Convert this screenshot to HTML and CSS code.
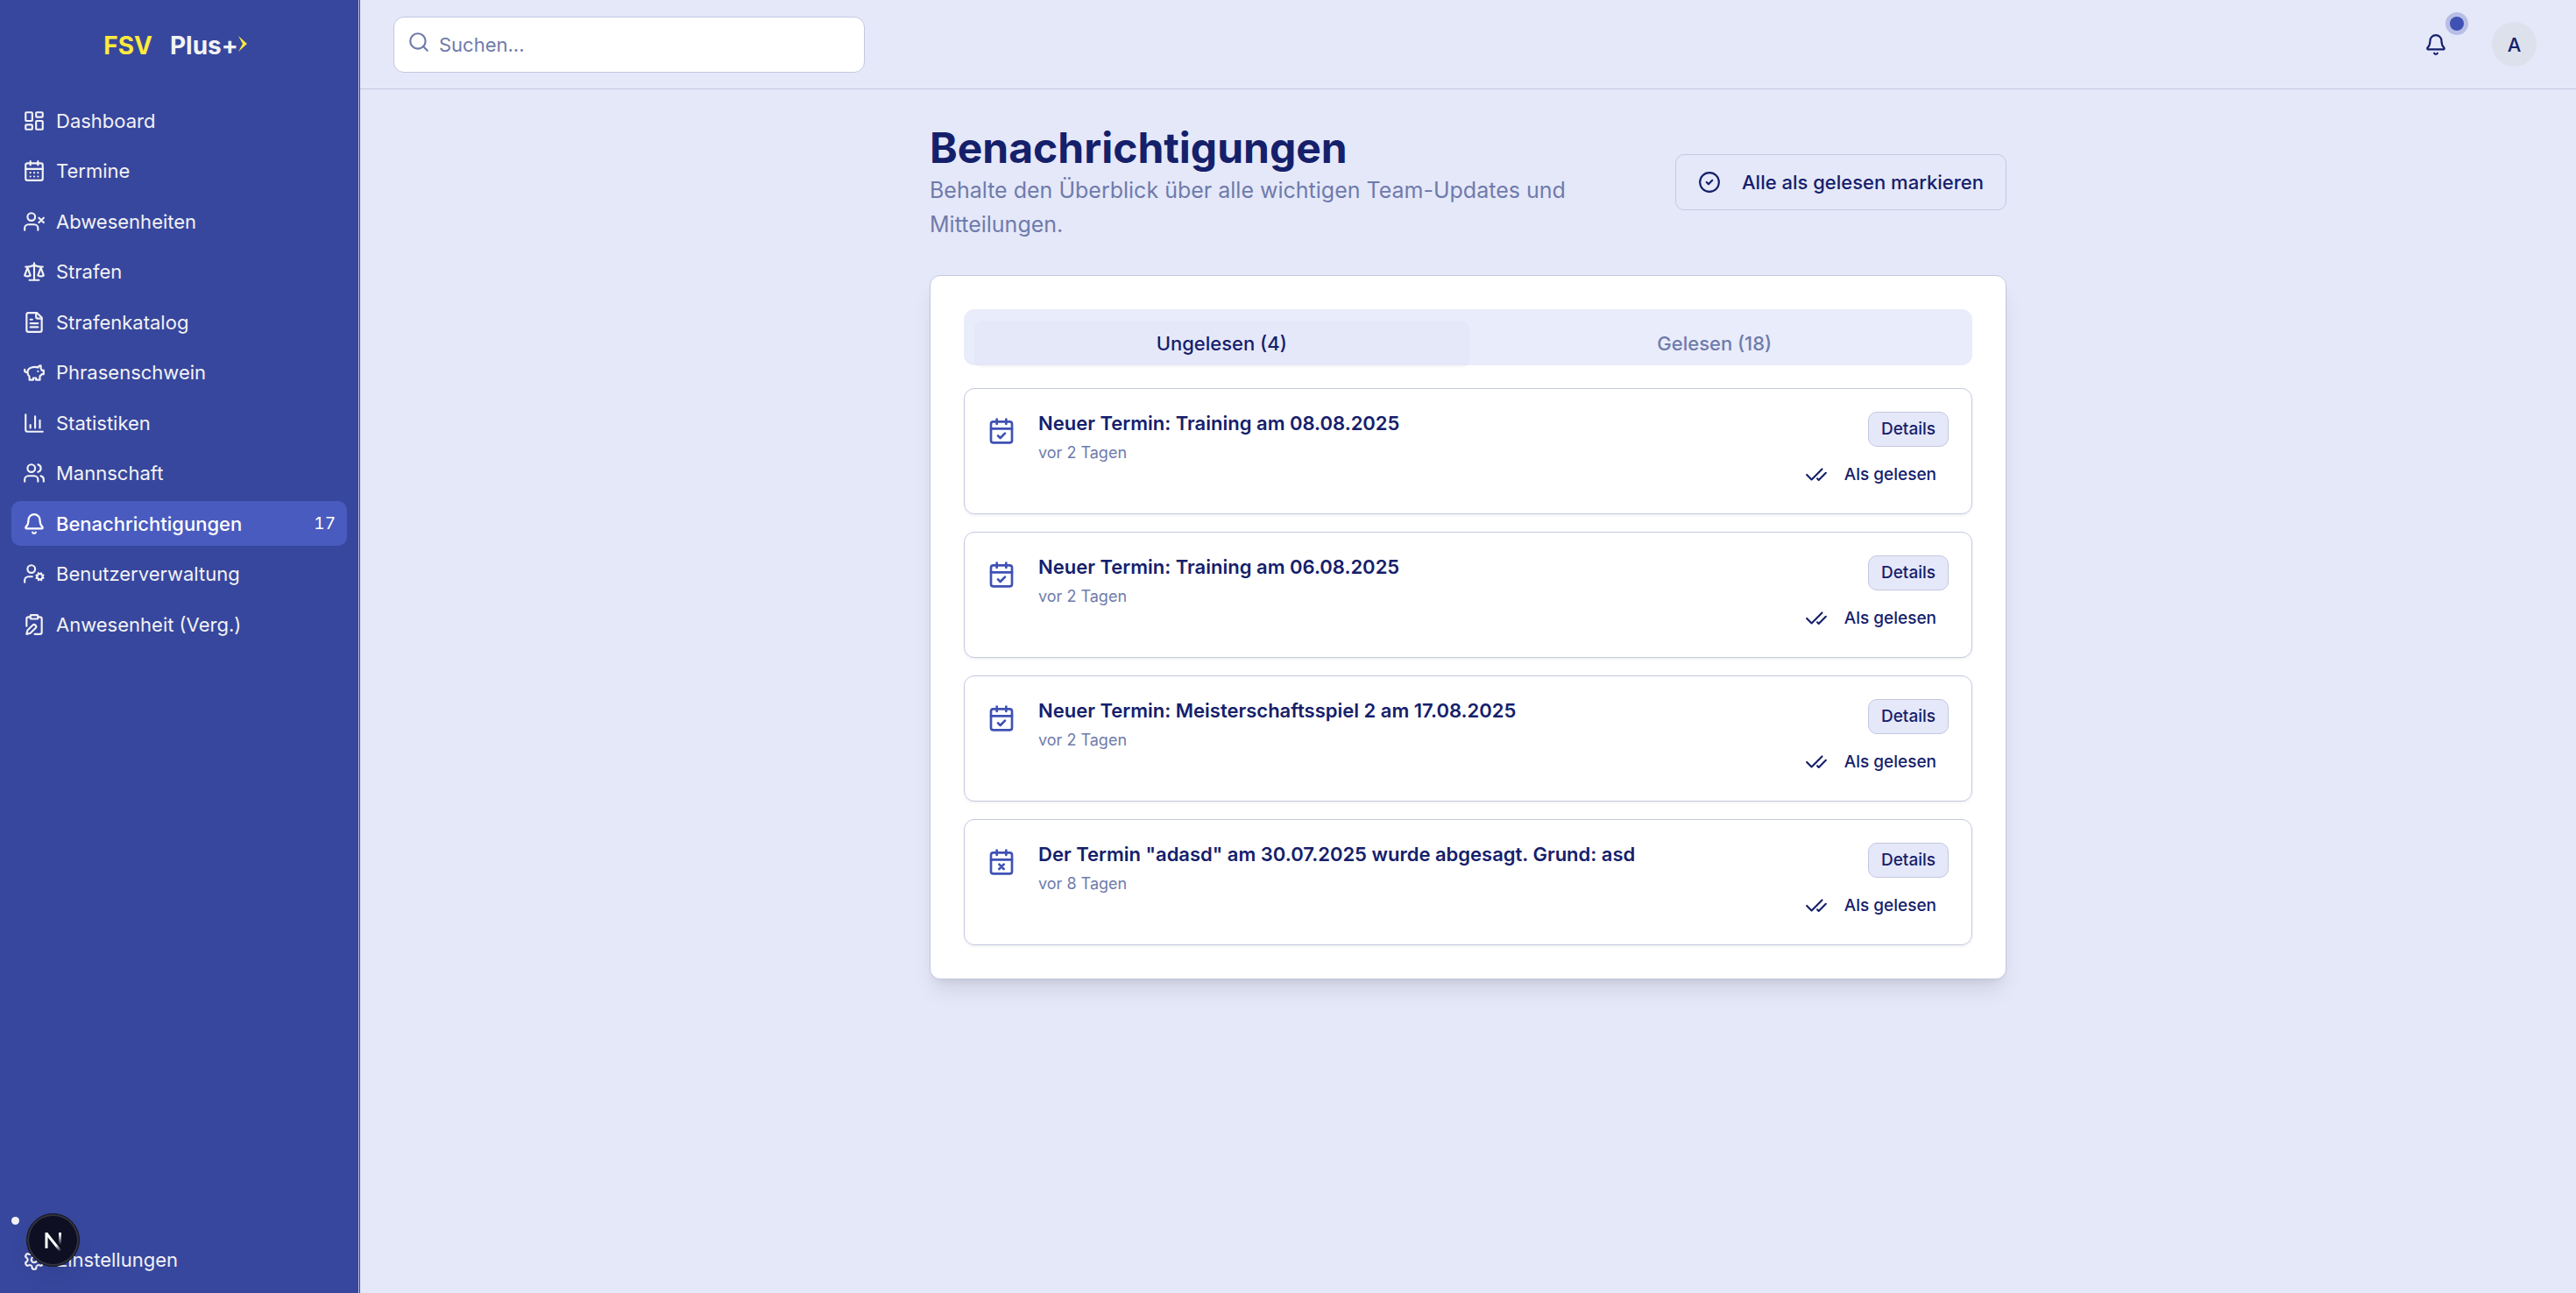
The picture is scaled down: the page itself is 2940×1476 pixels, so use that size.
FILE: index.html
```html
<!DOCTYPE html>
<html lang="de">
<head>
<meta charset="utf-8">
<meta name="viewport" content="width=device-width, initial-scale=1">
<title>Benachrichtigungen – FSV Plus+</title>
<link rel="stylesheet" href="styles.css">
</head>
<body>
<svg class="sprite" aria-hidden="true">
  <symbol id="i-calendar-check" viewBox="0 0 24 24"><path d="M8 2v4M16 2v4M3 10h18"/><rect x="3" y="4" width="18" height="18" rx="2"/><path d="m9 16 2 2 4-4"/></symbol>
  <symbol id="i-calendar-x" viewBox="0 0 24 24"><path d="M8 2v4M16 2v4M3 10h18"/><rect x="3" y="4" width="18" height="18" rx="2"/><path d="m14 14-4 4M10 14l4 4"/></symbol>
  <symbol id="i-check-check" viewBox="0 0 24 24"><path d="M18 6 7 17l-5-5M22 10l-7.5 7.5L13 16"/></symbol>
  <symbol id="i-bell" viewBox="0 0 24 24"><path d="M10.268 21a2 2 0 0 0 3.464 0"/><path d="M3.262 15.326A1 1 0 0 0 4 17h16a1 1 0 0 0 .74-1.673C19.41 13.956 18 12.499 18 8A6 6 0 0 0 6 8c0 4.499-1.411 5.956-2.738 7.326"/></symbol>
</svg>

<div class="app">
  <aside class="sidebar">
    <a class="logo" href="#" aria-label="FSV Plus+">
      <span class="logo-club">FSV</span>
      <span class="logo-plus">Plus+</span>
      <svg class="logo-mark" viewBox="0 0 10 18" aria-hidden="true"><path d="M0 0 10 9 0 18 5 9z"/></svg>
    </a>
    <nav aria-label="Hauptnavigation">
      <ul class="menu">
        <li><a class="menu-link" href="#"><svg class="icon" viewBox="0 0 24 24"><rect x="3" y="3" width="7" height="9" rx="1"/><rect x="14" y="3" width="7" height="5" rx="1"/><rect x="14" y="12" width="7" height="9" rx="1"/><rect x="3" y="16" width="7" height="5" rx="1"/></svg>Dashboard</a></li>
        <li><a class="menu-link" href="#"><svg class="icon" viewBox="0 0 24 24"><path d="M8 2v4M16 2v4M3 10h18"/><rect x="3" y="4" width="18" height="18" rx="2"/><path d="M8 14h.01M12 14h.01M16 14h.01M8 18h.01M12 18h.01M16 18h.01"/></svg>Termine</a></li>
        <li><a class="menu-link" href="#"><svg class="icon" viewBox="0 0 24 24"><path d="M16 21v-2a4 4 0 0 0-4-4H6a4 4 0 0 0-4 4v2"/><circle cx="9" cy="7" r="4"/><path d="m17 8 5 5M22 8l-5 5"/></svg>Abwesenheiten</a></li>
        <li><a class="menu-link" href="#"><svg class="icon" viewBox="0 0 24 24"><path d="m16 16 3-8 3 8c-.87.65-1.92 1-3 1s-2.13-.35-3-1Z"/><path d="m2 16 3-8 3 8c-.87.65-1.92 1-3 1s-2.13-.35-3-1Z"/><path d="M7 21h10M12 3v18M3 7h2c2 0 5-1 7-2 2 1 5 2 7 2h2"/></svg>Strafen</a></li>
        <li><a class="menu-link" href="#"><svg class="icon" viewBox="0 0 24 24"><path d="M15 2H6a2 2 0 0 0-2 2v16a2 2 0 0 0 2 2h12a2 2 0 0 0 2-2V7Z"/><path d="M14 2v4a2 2 0 0 0 2 2h4M10 9H8M16 13H8M16 17H8"/></svg>Strafenkatalog</a></li>
        <li><a class="menu-link" href="#"><svg class="icon" viewBox="0 0 24 24"><path d="M19 5c-1.5 0-2.8 1.4-3 2-3.5-1.5-11-.3-11 5 0 1.8 0 3 2 4.5V20h4v-2h3v2h4v-4c1-.5 1.7-1 2-2h2v-4h-2c0-1-.5-1.5-1-2V5z"/><path d="M2 9v1c0 1.1.9 2 2 2h1M16 11h.01"/></svg>Phrasenschwein</a></li>
        <li><a class="menu-link" href="#"><svg class="icon" viewBox="0 0 24 24"><path d="M3 3v16a2 2 0 0 0 2 2h16M18 17V9M13 17V5M8 17v-3"/></svg>Statistiken</a></li>
        <li><a class="menu-link" href="#"><svg class="icon" viewBox="0 0 24 24"><path d="M16 21v-2a4 4 0 0 0-4-4H6a4 4 0 0 0-4 4v2"/><circle cx="9" cy="7" r="4"/><path d="M22 21v-2a4 4 0 0 0-3-3.87M16 3.13a4 4 0 0 1 0 7.75"/></svg>Mannschaft</a></li>
        <li><a class="menu-link is-active" href="#" aria-current="page"><svg class="icon"><use href="#i-bell"/></svg>Benachrichtigungen<span class="menu-count">17</span></a></li>
        <li><a class="menu-link" href="#"><svg class="icon" viewBox="0 0 24 24"><circle cx="18" cy="15" r="3"/><circle cx="9" cy="7" r="4"/><path d="M10 15H6a4 4 0 0 0-4 4v2M21.7 16.4l-.9-.3M15.2 13.9l-.9-.3M16.6 18.7l.3-.9M19.1 12.2l.3-.9M19.6 18.7l-.4-1M16.8 12.3l-.4-1M14.3 16.6l1-.4M20.7 13.8l1-.4"/></svg>Benutzerverwaltung</a></li>
        <li><a class="menu-link" href="#"><svg class="icon" viewBox="0 0 24 24"><rect x="8" y="2" width="8" height="4" rx="1"/><path d="M10.4 12.6a2 2 0 0 1 3 3L8 21l-4 1 1-4Z"/><path d="M16 4h2a2 2 0 0 1 2 2v14a2 2 0 0 1-2 2h-5.5M4 13.5V6a2 2 0 0 1 2-2h2"/></svg>Anwesenheit (Verg.)</a></li>
      </ul>
    </nav>
    <div class="sidebar-footer">
      <span class="bullet"></span>
      <a class="menu-link" href="#"><svg class="icon" viewBox="0 0 24 24"><path d="M12.22 2h-.44a2 2 0 0 0-2 2v.18a2 2 0 0 1-1 1.73l-.43.25a2 2 0 0 1-2 0l-.15-.08a2 2 0 0 0-2.73.73l-.22.38a2 2 0 0 0 .73 2.73l.15.1a2 2 0 0 1 1 1.72v.51a2 2 0 0 1-1 1.74l-.15.09a2 2 0 0 0-.73 2.73l.22.38a2 2 0 0 0 2.73.73l.15-.08a2 2 0 0 1 2 0l.43.25a2 2 0 0 1 1 1.73V20a2 2 0 0 0 2 2h.44a2 2 0 0 0 2-2v-.18a2 2 0 0 1 1-1.73l.43-.25a2 2 0 0 1 2 0l.15.08a2 2 0 0 0 2.73-.73l.22-.39a2 2 0 0 0-.73-2.73l-.15-.08a2 2 0 0 1-1-1.74v-.5a2 2 0 0 1 1-1.74l.15-.09a2 2 0 0 0 .73-2.73l-.22-.38a2 2 0 0 0-2.73-.73l-.15.08a2 2 0 0 1-2 0l-.43-.25a2 2 0 0 1-1-1.73V4a2 2 0 0 0-2-2z"/><circle cx="12" cy="12" r="3"/></svg>Einstellungen</a>
    </div>
  </aside>

  <div class="content">
    <header class="topbar">
      <label class="search">
        <svg class="icon search-icon" viewBox="0 0 24 24"><circle cx="11" cy="11" r="8"/><path d="m21 21-4.3-4.3"/></svg>
        <input class="search-input" type="search" placeholder="Suchen..." aria-label="Suchen">
      </label>
      <div class="topbar-actions">
        <button class="bell-button" type="button" aria-label="Benachrichtigungen"><svg class="icon"><use href="#i-bell"/></svg><span class="bell-dot"></span></button>
        <button class="avatar" type="button" aria-label="Benutzerkonto">A</button>
      </div>
    </header>

    <main class="page">
      <div class="page-head">
        <div>
          <h1 class="page-title">Benachrichtigungen</h1>
          <p class="page-lead">Behalte den Überblick über alle wichtigen Team-Updates und Mitteilungen.</p>
        </div>
        <button class="mark-all" type="button"><svg class="icon" viewBox="0 0 24 24"><circle cx="12" cy="12" r="10"/><path d="m9 12 2 2 4-4"/></svg>Alle als gelesen markieren</button>
      </div>

      <section class="card">
        <div class="tabs" role="tablist">
          <button class="tab is-active" type="button" role="tab" aria-selected="true">Ungelesen (4)</button>
          <button class="tab" type="button" role="tab" aria-selected="false">Gelesen (18)</button>
        </div>
        <ul class="notices">
          <li class="notice">
            <svg class="icon notice-icon"><use href="#i-calendar-check"/></svg>
            <div class="notice-text"><p class="notice-title">Neuer Termin: Training am 08.08.2025</p><p class="notice-time">vor 2 Tagen</p></div>
            <div class="notice-actions"><button class="btn-details" type="button">Details</button><button class="btn-read" type="button"><svg class="icon"><use href="#i-check-check"/></svg>Als gelesen</button></div>
          </li>
          <li class="notice">
            <svg class="icon notice-icon"><use href="#i-calendar-check"/></svg>
            <div class="notice-text"><p class="notice-title">Neuer Termin: Training am 06.08.2025</p><p class="notice-time">vor 2 Tagen</p></div>
            <div class="notice-actions"><button class="btn-details" type="button">Details</button><button class="btn-read" type="button"><svg class="icon"><use href="#i-check-check"/></svg>Als gelesen</button></div>
          </li>
          <li class="notice">
            <svg class="icon notice-icon"><use href="#i-calendar-check"/></svg>
            <div class="notice-text"><p class="notice-title">Neuer Termin: Meisterschaftsspiel 2 am 17.08.2025</p><p class="notice-time">vor 2 Tagen</p></div>
            <div class="notice-actions"><button class="btn-details" type="button">Details</button><button class="btn-read" type="button"><svg class="icon"><use href="#i-check-check"/></svg>Als gelesen</button></div>
          </li>
          <li class="notice">
            <svg class="icon notice-icon"><use href="#i-calendar-x"/></svg>
            <div class="notice-text"><p class="notice-title">Der Termin "adasd" am 30.07.2025 wurde abgesagt. Grund: asd</p><p class="notice-time">vor 8 Tagen</p></div>
            <div class="notice-actions"><button class="btn-details" type="button">Details</button><button class="btn-read" type="button"><svg class="icon"><use href="#i-check-check"/></svg>Als gelesen</button></div>
          </li>
        </ul>
      </section>
    </main>
  </div>
</div>

<button class="dev-badge" type="button" aria-label="Next.js Dev Tools">
  <svg viewBox="0 0 40 40" aria-hidden="true">
    <defs>
      <linearGradient id="fade-diagonal" gradientUnits="userSpaceOnUse" x1="20" y1="21" x2="28" y2="32"><stop offset="0.4" stop-color="#fff"/><stop offset="1" stop-color="#fff" stop-opacity="0"/></linearGradient>
      <linearGradient id="fade-stem" gradientUnits="userSpaceOnUse" x1="0" y1="11" x2="0" y2="25"><stop offset="0.1" stop-color="#fff"/><stop offset="1" stop-color="#fff" stop-opacity="0"/></linearGradient>
    </defs>
    <path d="M12 29V11" stroke="#fff"/>
    <path d="M12 12 28 32" stroke="url(#fade-diagonal)"/>
    <rect x="26" y="11" width="3" height="14" fill="url(#fade-stem)"/>
  </svg>
</button>
</body>
</html>
```
FILE: styles.css
```css
:root {
  --page: #e5e8f9;
  --ink: #15206b;
  --muted: #6f7bab;
  --line: #c3c8de;
  --primary: #3f51b5;
  --sidebar: #37479d;
}

*, *::before, *::after { box-sizing: border-box; }

body {
  margin: 0;
  background: var(--page);
  color: var(--ink);
  font: 400 22px/32px Inter, "Liberation Sans", sans-serif;
}

h1, p, ul { margin: 0; padding: 0; }
ul { list-style: none; }
a { color: inherit; text-decoration: none; }

button {
  border: 0;
  padding: 0;
  background: none;
  color: inherit;
  font: inherit;
  font-weight: 500;
  cursor: pointer;
}

.sprite { position: absolute; width: 0; height: 0; }

.icon {
  flex: none;
  width: 26px;
  height: 26px;
  fill: none;
  stroke: currentColor;
  stroke-width: 2;
  stroke-linecap: round;
  stroke-linejoin: round;
}

.app { display: flex; min-height: 100vh; }

/* Sidebar */
.sidebar {
  position: sticky;
  top: 0;
  display: flex;
  flex: none;
  flex-direction: column;
  width: 411px;
  height: 100vh;
  border-right: 1px solid #2f3e91;
  box-shadow: inset -1px 0 var(--line);
  background: var(--sidebar);
  color: #f2f2f5;
}

.logo {
  display: flex;
  align-items: center;
  justify-content: center;
  height: 104px;
  padding-right: 10px;
  font-size: 28px;
  font-weight: 700;
}
.logo-club { margin-right: 20px; color: #ffeb3b; }
.logo-mark { width: 10px; height: 18px; margin-bottom: 4px; fill: #ffeb3b; }

.menu { padding: 8px 14px 8px 13px; }
.menu li { margin-bottom: 6px; }
.menu li:nth-child(even) { margin-bottom: 7px; }

.menu-link {
  display: flex;
  align-items: center;
  gap: 12px;
  height: 51px;
  padding: 0 13px;
  border-radius: 10px;
}
.menu-link.is-active { background: #4a5bbf; color: #fff; font-weight: 500; }
.menu-count { margin-left: auto; font-size: 19px; font-weight: 400; font-variant-numeric: tabular-nums; }

.sidebar-footer { margin-top: auto; padding: 13px; }
.bullet { display: block; width: 9px; height: 9px; margin-bottom: 14px; border-radius: 50%; background: #f2f2f5; }

/* Top bar */
.content { flex: 1; min-width: 0; }

.topbar {
  display: flex;
  align-items: center;
  justify-content: space-between;
  height: 102px;
  padding: 0 45px 0 38px;
  border-bottom: 1px solid var(--line);
}

.search { position: relative; width: 538px; }
.search-icon { position: absolute; top: 16px; left: 16px; color: var(--muted); }
.search-input {
  display: block;
  width: 100%;
  height: 64px;
  padding: 0 16px 0 51px;
  border: 1px solid var(--line);
  border-radius: 12px;
  background: #fff;
  color: var(--ink);
  font: inherit;
}
.search-input::placeholder { color: var(--muted); opacity: 1; }

.topbar-actions { display: flex; align-items: center; gap: 32px; }
.bell-button { position: relative; display: grid; place-items: center; width: 64px; height: 64px; }
.bell-dot {
  position: absolute;
  top: 0;
  right: 0;
  width: 16px;
  height: 16px;
  border-radius: 50%;
  background: var(--primary);
  box-shadow: 0 0 0 5px #b8bfe6;
}
.avatar { width: 51px; height: 51px; border-radius: 50%; background: #dde1ec; }

/* Page */
.page { max-width: 1305px; margin: 0 auto; padding: 38px; }

.page-head {
  display: flex;
  align-items: center;
  justify-content: space-between;
  gap: 26px;
  margin-bottom: 38px;
}
.page-title { font-size: 48px; font-weight: 700; line-height: 58px; }
.page-lead { color: var(--muted); font-size: 25px; line-height: 39px; }

.mark-all {
  display: flex;
  flex: none;
  align-items: center;
  gap: 24px;
  height: 64px;
  padding: 0 25px;
  border: 1px solid var(--line);
  border-radius: 10px;
}

.card {
  padding: 38px;
  border: 1px solid var(--line);
  border-radius: 12px;
  background: #fff;
  box-shadow: 0 16px 24px -5px rgb(0 0 0 / 0.1), 0 6px 10px -6px rgb(0 0 0 / 0.1);
}

.tabs {
  display: grid;
  grid-template-columns: 1fr 1fr;
  margin-bottom: 26px;
  padding: 13px 13px 0;
  border-radius: 12px;
  background: #e9ecfb;
}
.tab { height: 51px; border-radius: 8px; color: var(--muted); }
.tab.is-active { background: var(--page); color: var(--ink); box-shadow: 0 2px 3px rgb(0 0 0 / 0.05); }

.notices { display: grid; gap: 20px; }
.notice {
  display: flex;
  align-items: flex-start;
  gap: 26px;
  padding: 26px 26px 24px;
  border: 1px solid var(--line);
  border-radius: 12px;
  box-shadow: 0 2px 3px rgb(0 0 0 / 0.05);
}
.notice-icon { width: 32px; height: 32px; margin-top: 6px; color: var(--primary); }
.notice-text { flex: 1; min-width: 0; }
.notice-title { font-weight: 600; line-height: 26px; }
.notice-time { margin-top: 8px; color: var(--muted); font-size: 18px; line-height: 26px; }

.notice-actions { display: flex; flex-direction: column; align-items: flex-end; gap: 12px; }
.btn-details, .btn-read { height: 40px; padding: 0 14px; font-size: 19px; }
.btn-details { border: 1px solid var(--line); border-radius: 10px; background: var(--page); }
.btn-read { display: flex; align-items: center; gap: 19px; }

/* Framework badge floating over the lower left corner */
.dev-badge {
  position: fixed;
  left: 30px;
  bottom: 30px;
  width: 61px;
  height: 61px;
  border: 1px solid #16171f;
  border-radius: 50%;
  background: #0e0f22;
  box-shadow: inset 0 0 0 2px #32343f, 0 16px 32px -8px rgb(0 0 0 / 0.1);
}
.dev-badge svg { display: block; width: 40px; height: 40px; margin: auto; fill: none; stroke-width: 3; }
```
